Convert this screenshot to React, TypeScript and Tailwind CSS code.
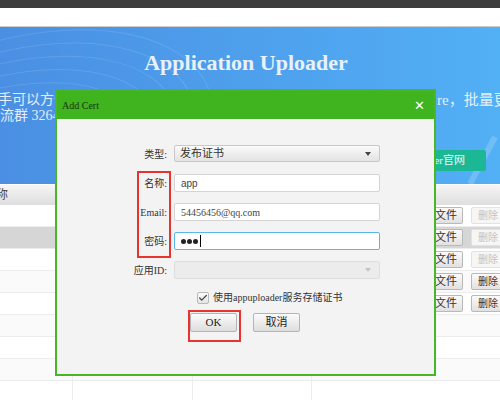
import { Check } from 'lucide-react';

const serif = "font-['Liberation_Serif','Noto_Sans_CJK_SC',serif]";

const rows = [
    { del: false },
    { del: false, selected: true },
    { del: false },
    { del: true },
    { del: true },
    null,
    null,
    null,
    null,
];

function BannerArcs() {
    return (
        <svg
            aria-hidden
            className="absolute inset-0 h-full w-full"
            viewBox="0 0 500 157"
            fill="none"
        >
            {[0, 1, 2, 3, 4, 5].map((i) => (
                <ellipse
                    key={i}
                    cx={-20 + i * 6}
                    cy={150 - i * 4}
                    rx={150 + i * 12}
                    ry={70 + i * 9}
                    stroke="white"
                    strokeOpacity={0.12}
                    transform={`rotate(-18 ${-20 + i * 6} ${150 - i * 4})`}
                />
            ))}
            <path d="M470 157 L495 110" stroke="white" strokeOpacity={0.18} strokeWidth={6} />
        </svg>
    );
}

function TableRow({ row, even }: { row: (typeof rows)[number]; even: boolean }) {
    const bg = row && 'selected' in row && row.selected ? 'bg-[#d6d6d6]' : even ? 'bg-white' : 'bg-[#fafafa]';
    return (
        <div className={`flex h-[22px] border-b border-[#ececec] ${bg}`}>
            <div className="w-[73px] shrink-0 border-r border-[#ececec]" />
            <div className="w-[120px] shrink-0 border-r border-[#ececec]" />
            <div className="w-[119px] shrink-0 border-r border-[#ececec]" />
            <div className="w-[93px] shrink-0" />
            <div className="flex min-w-0 flex-1 items-center gap-[8px] overflow-hidden pl-[6px]">
                {row && (
                    <>
                        <span className="flex h-[17px] w-[52px] shrink-0 items-center justify-end rounded-[2px] border border-[#b9b9b9] bg-gradient-to-b from-[#fbfbfb] to-[#e1e1e1] pr-[5px] text-[11px] text-[#333]">
                            上传文件
                        </span>
                        <span
                            className={`flex h-[17px] w-[34px] shrink-0 items-center justify-center rounded-[2px] border text-[10px] ${
                                row.del
                                    ? 'border-[#b9b9b9] bg-gradient-to-b from-[#fbfbfb] to-[#e1e1e1] text-[#333]'
                                    : 'border-[#e2e2e2] bg-[#f6f6f6] text-[#c3c3c3]'
                            }`}
                        >
                            删除
                        </span>
                    </>
                )}
            </div>
        </div>
    );
}

function Field({ label, children }: { label: string; children: React.ReactNode }) {
    return (
        <div className="flex h-[18px] items-center">
            <span className="w-[111px] shrink-0 pr-px text-right text-[10px] text-[#333]">{label}</span>
            <div className="ml-[6px] h-full w-[206px]">{children}</div>
        </div>
    );
}

function Triangle({ light }: { light?: boolean }) {
    return (
        <span
            className={`h-0 w-0 border-x-[3.5px] border-t-[4px] border-x-transparent ${
                light ? 'border-t-[#c4c4c4]' : 'border-t-[#444]'
            }`}
        />
    );
}

export default function App() {
    return (
        <div className={`relative h-[400px] w-[500px] overflow-hidden bg-white ${serif}`}>
            <div className="h-[8px] bg-[#3d3d3d]" />
            <div className="h-[19px] border-b border-[#cdcdcd] bg-white" />

            <div className="relative h-[157px] overflow-hidden bg-gradient-to-r from-[#4a8fe3] to-[#52b0f5]">
                <BannerArcs />
                <div className="relative flex flex-col">
                    <h1 className="pt-[23px] pr-[8px] text-center text-[22px] leading-[26px] font-bold text-[#e9f1fb]">
                        Application Uploader
                    </h1>
                    <div className="mt-[16px] flex h-[16px] items-center text-[14px] leading-[16px] whitespace-nowrap text-[#e4eefb]">
                        <span className="w-[437px] shrink-0 overflow-hidden">
                            <span className="ml-[-16px]">助手可以方便快捷地上传ipa到App Sto</span>
                        </span>
                        <span className="text-[15px]">re，批量更新</span>
                    </div>
                    <div className="flex h-[16px] items-center text-[14px] leading-[16px] whitespace-nowrap text-[#e4eefb]">
                        <span className="ml-[-14px]">交流群 326485932</span>
                    </div>
                    <div className="mt-[26px] flex justify-end pr-[14px]">
                        <span className="flex h-[21px] items-center rounded-[2px] bg-[#1cb795] pr-[21px] pl-[25px] text-[11px] text-[#eafaf5]">
                            appuploader官网
                        </span>
                    </div>
                </div>
            </div>

            <div className="flex h-[21px] items-center border-t border-white bg-gradient-to-b from-[#f5f5f5] to-[#dedede] text-[12px] text-[#444]">
                <span className="ml-[-16px]">名称</span>
            </div>
            {rows.map((row, i) => (
                <TableRow key={i} row={row} even={i % 2 === 0} />
            ))}

            <div className="absolute top-[89px] left-[55px] flex h-[287px] w-[381px] flex-col border-2 border-[#47b628] bg-[#f3f3f3]">
                <div className="flex h-[28px] shrink-0 items-center justify-between bg-[#3fb41e] pr-[9px] pl-[5px]">
                    <span className="text-[10px] text-[#1d3514]">Add Cert</span>
                    <span className="font-['DejaVu_Sans',sans-serif] text-[13px] leading-none font-bold text-white">✕</span>
                </div>

                <div className="relative flex flex-col pt-[26px]">
                    <div className="flex flex-col gap-[11px]">
                        <Field label="类型:">
                            <div className="flex h-[17px] items-center justify-between rounded-[2px] border border-[#c8c8c8] bg-gradient-to-b from-[#fafafa] to-[#e3e3e3] pr-[8px] pl-[5px] text-[11px] text-[#333]">
                                发布证书
                                <Triangle />
                            </div>
                        </Field>
                        <Field label="名称:">
                            <div className="flex h-full items-center rounded-[2px] border border-[#d4d4d4] bg-white pl-[6px] font-['Liberation_Sans',sans-serif] text-[10px] text-[#444]">
                                app
                            </div>
                        </Field>
                        <Field label="Email:">
                            <div className="flex h-full items-center rounded-[2px] border border-[#d4d4d4] bg-white pl-[6px] text-[10px] text-[#444]">
                                54456456@qq.com
                            </div>
                        </Field>
                        <Field label="密码:">
                            <div className="flex h-full items-center gap-px rounded-[2px] border border-[#5ab8e6] bg-white pl-[6px]">
                                <span className="h-[5px] w-[5px] rounded-full bg-[#222]" />
                                <span className="h-[5px] w-[5px] rounded-full bg-[#222]" />
                                <span className="h-[5px] w-[5px] rounded-full bg-[#222]" />
                                <span className="ml-px h-[12px] w-px bg-black" />
                            </div>
                        </Field>
                        <Field label="应用ID:">
                            <div className="flex h-full items-center justify-end rounded-[2px] border border-[#dedede] bg-[#ececec] pr-[8px]">
                                <Triangle light />
                            </div>
                        </Field>
                    </div>

                    <div className="mt-[11px] flex items-center gap-[4px] pl-[140px] text-[10px] text-[#333]">
                        <span className="flex h-[12px] w-[12px] items-center justify-center rounded-[2px] border border-[#b9b9b9] bg-gradient-to-b from-[#fbfbfb] to-[#e4e4e4]">
                            <Check className="h-[10px] w-[10px] text-[#444]" strokeWidth={3} />
                        </span>
                        使用appuploader服务存储证书
                    </div>

                    <div className="mt-[8px] flex justify-center gap-[16px] pr-[1px]">
                        <span className="flex h-[19px] w-[47px] items-center justify-center rounded-[2px] border border-[#b4b4b4] bg-gradient-to-b from-[#fbfbfb] to-[#dedede] text-[11px] text-[#222]">
                            OK
                        </span>
                        <span className="flex h-[19px] w-[47px] items-center justify-center rounded-[2px] border border-[#b4b4b4] bg-gradient-to-b from-[#fbfbfb] to-[#dedede] text-[11px] text-[#222]">
                            取消
                        </span>
                    </div>

                    <div className="absolute top-[52px] left-[80px] h-[87px] w-[34px] border-2 border-[#e8332f]" />
                    <div className="absolute top-[191px] left-[131px] h-[32px] w-[53px] border-2 border-[#e8332f]" />
                </div>
            </div>
        </div>
    );
}
